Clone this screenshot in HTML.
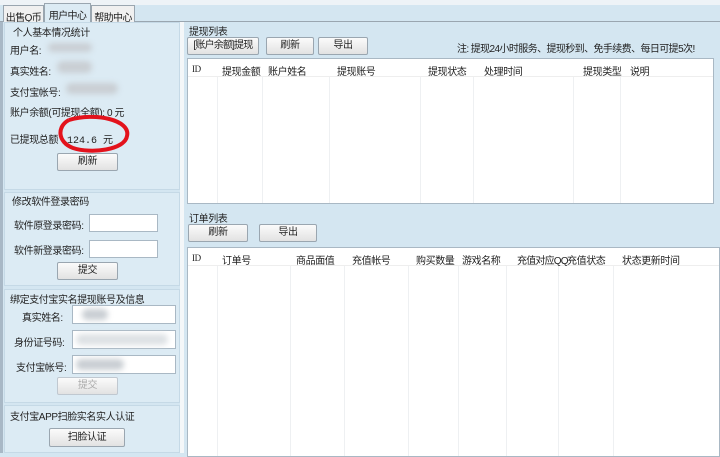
<!DOCTYPE html>
<html><head><meta charset="utf-8"><style>
*{margin:0;padding:0;box-sizing:border-box}
body{width:720px;height:453px;overflow:hidden;background:#d4e6f1;font-family:"Liberation Sans","Noto Sans CJK SC",sans-serif;font-size:10px;letter-spacing:-0.4px;color:#222;position:relative}
.a{position:absolute;white-space:nowrap}
.grp{position:absolute;background:#dcebf4;border:1px solid #c5d9e6}
.btn{position:absolute;background:linear-gradient(#fbfbfb,#e2e2e2);border:1px solid #9aa6b0;border-radius:2px;text-align:center;font-size:10px;color:#222;white-space:nowrap;overflow:hidden}
.in{position:absolute;background:#fff;border:1px solid #a9b8c4}
.tbl{position:absolute;background:#fff;border:1px solid #a9b8c4}
.blur{position:absolute;background:#c9ced3;filter:blur(3px);border-radius:6px}
.tab{position:absolute;top:5px;height:17px;border:1px solid #9aa6b0;border-bottom:none;background:#f0f0f0;font-size:10px;padding:3px 1px 0;white-space:nowrap;letter-spacing:-0.6px;text-align:center}
.vl{position:absolute;top:0;bottom:0;border-left:1px solid #eef0f2}
</style></head><body>
<div class="a" style="left:0;top:0;width:720px;height:5px;background:#eef3f7"></div>
<div class="a" style="left:0;top:21px;width:720px;height:1px;background:#9aa6b0"></div>
<div class="tab" style="left:3px;width:41px">出售Q币</div>
<div class="tab" style="left:44px;top:3px;height:19px;width:47px;background:#dcebf4">用户中心</div>
<div class="tab" style="left:91px;width:44px">帮助中心</div>

<div class="a" style="left:0;top:22px;width:3px;height:431px;background:#a8b8c6"></div>
<div class="a" style="left:180px;top:22px;width:4px;height:431px;background:#f4f7f9"></div>

<div class="grp" style="left:4px;top:22px;width:176px;height:168px"></div>
<div class="a" style="left:13px;top:24px">个人基本情况统计</div>
<div class="a" style="left:10px;top:42px">用户名:</div><div class="blur" style="left:48px;top:43px;width:44px;height:9px"></div>
<div class="a" style="left:10px;top:63px">真实姓名:</div><div class="blur" style="left:57px;top:61px;width:35px;height:12px"></div>
<div class="a" style="left:10px;top:84px">支付宝帐号:</div><div class="blur" style="left:66px;top:83px;width:52px;height:11px"></div>
<div class="a" style="left:10px;top:104px">账户余额(可提现全额): 0 元</div>
<div class="a" style="left:10px;top:131px">已提现总额</div><div class="a" style="left:67px;top:131px;font-family:'Liberation Mono',monospace;font-size:10px;letter-spacing:0">124.6 元</div>
<svg class="a" style="left:55px;top:114px" width="80" height="42"><path d="M14 6 C40 -2 76 6 72 22 C70 36 36 40 18 34 C2 28 2 12 14 6" fill="none" stroke="#e3121c" stroke-width="4"/></svg>
<div class="btn" style="left:57px;top:153px;width:61px;height:18px;line-height:16px">刷新</div>

<div class="grp" style="left:4px;top:192px;width:176px;height:94px"></div>
<div class="a" style="left:12px;top:193px">修改软件登录密码</div>
<div class="a" style="left:14px;top:217px">软件原登录密码:</div><div class="in" style="left:89px;top:214px;width:69px;height:18px"></div>
<div class="a" style="left:14px;top:242px">软件新登录密码:</div><div class="in" style="left:89px;top:240px;width:69px;height:18px"></div>
<div class="btn" style="left:57px;top:262px;width:61px;height:18px;line-height:16px">提交</div>

<div class="grp" style="left:4px;top:289px;width:176px;height:114px"></div>
<div class="a" style="left:10px;top:291px">绑定支付宝实名提现账号及信息</div>
<div class="a" style="left:22px;top:309px">真实姓名:</div><div class="in" style="left:72px;top:305px;width:104px;height:19px"></div><div class="blur" style="left:82px;top:309px;width:26px;height:11px"></div>
<div class="a" style="left:14px;top:334px">身份证号码:</div><div class="in" style="left:72px;top:330px;width:104px;height:19px"></div><div class="blur" style="left:76px;top:334px;width:92px;height:11px;background:#dde1e4"></div>
<div class="a" style="left:16px;top:359px">支付宝帐号:</div><div class="in" style="left:72px;top:355px;width:104px;height:19px"></div><div class="blur" style="left:76px;top:359px;width:48px;height:11px"></div>
<div class="btn" style="left:57px;top:377px;width:61px;height:18px;line-height:16px;color:#aaa;border-color:#c0c8d0">提交</div>

<div class="grp" style="left:4px;top:405px;width:176px;height:48px"></div>
<div class="a" style="left:10px;top:408px">支付宝APP扫脸实名实人认证</div>
<div class="btn" style="left:49px;top:428px;width:76px;height:19px;line-height:17px">扫脸认证</div>

<div class="a" style="left:189px;top:23px">提现列表</div>
<div class="btn" style="left:187px;top:37px;width:72px;height:18px;line-height:16px;letter-spacing:-0.8px">[账户余额]提现</div>
<div class="btn" style="left:266px;top:37px;width:48px;height:18px;line-height:16px">刷新</div>
<div class="btn" style="left:318px;top:37px;width:50px;height:18px;line-height:16px">导出</div>
<div class="a" style="left:457px;top:40px;letter-spacing:-0.6px">注: 提现24小时服务、提现秒到、免手续费、每日可提5次!</div>
<div class="tbl" style="left:187px;top:58px;width:527px;height:146px">
<div class="vl" style="left:29px"></div><div class="vl" style="left:74px"></div><div class="vl" style="left:141px"></div><div class="vl" style="left:232px"></div><div class="vl" style="left:285px"></div><div class="vl" style="left:385px"></div><div class="vl" style="left:432px"></div>
<div class="a" style="left:0;top:0;width:525px;height:18px;background:#fff;border-bottom:1px solid #eee"></div>
</div>
<div class="a" style="left:192px;top:64px;font-family:'Liberation Serif',serif;font-size:9px">ID</div>
<div class="a" style="left:222px;top:63px">提现金额</div><div class="a" style="left:268px;top:63px">账户姓名</div><div class="a" style="left:337px;top:63px">提现账号</div><div class="a" style="left:428px;top:63px">提现状态</div><div class="a" style="left:484px;top:63px">处理时间</div><div class="a" style="left:583px;top:63px">提现类型</div><div class="a" style="left:630px;top:63px">说明</div>

<div class="a" style="left:189px;top:210px">订单列表</div>
<div class="btn" style="left:188px;top:224px;width:60px;height:18px;line-height:16px">刷新</div>
<div class="btn" style="left:259px;top:224px;width:58px;height:18px;line-height:16px">导出</div>
<div class="tbl" style="left:187px;top:247px;width:533px;height:210px">
<div class="vl" style="left:29px"></div><div class="vl" style="left:102px"></div><div class="vl" style="left:156px"></div><div class="vl" style="left:220px"></div><div class="vl" style="left:270px"></div><div class="vl" style="left:318px"></div><div class="vl" style="left:370px"></div><div class="vl" style="left:425px"></div>
<div class="a" style="left:0;top:0;width:531px;height:18px;background:#fff;border-bottom:1px solid #eee"></div>
</div>
<div class="a" style="left:192px;top:253px;font-family:'Liberation Serif',serif;font-size:9px">ID</div>
<div class="a" style="left:222px;top:252px">订单号</div><div class="a" style="left:296px;top:252px">商品面值</div><div class="a" style="left:352px;top:252px">充值帐号</div><div class="a" style="left:416px;top:252px">购买数量</div><div class="a" style="left:462px;top:252px">游戏名称</div><div class="a" style="left:517px;top:252px;letter-spacing:-0.8px">充值对应QQ</div><div class="a" style="left:567px;top:252px">充值状态</div><div class="a" style="left:622px;top:252px">状态更新时间</div>
</body></html>
